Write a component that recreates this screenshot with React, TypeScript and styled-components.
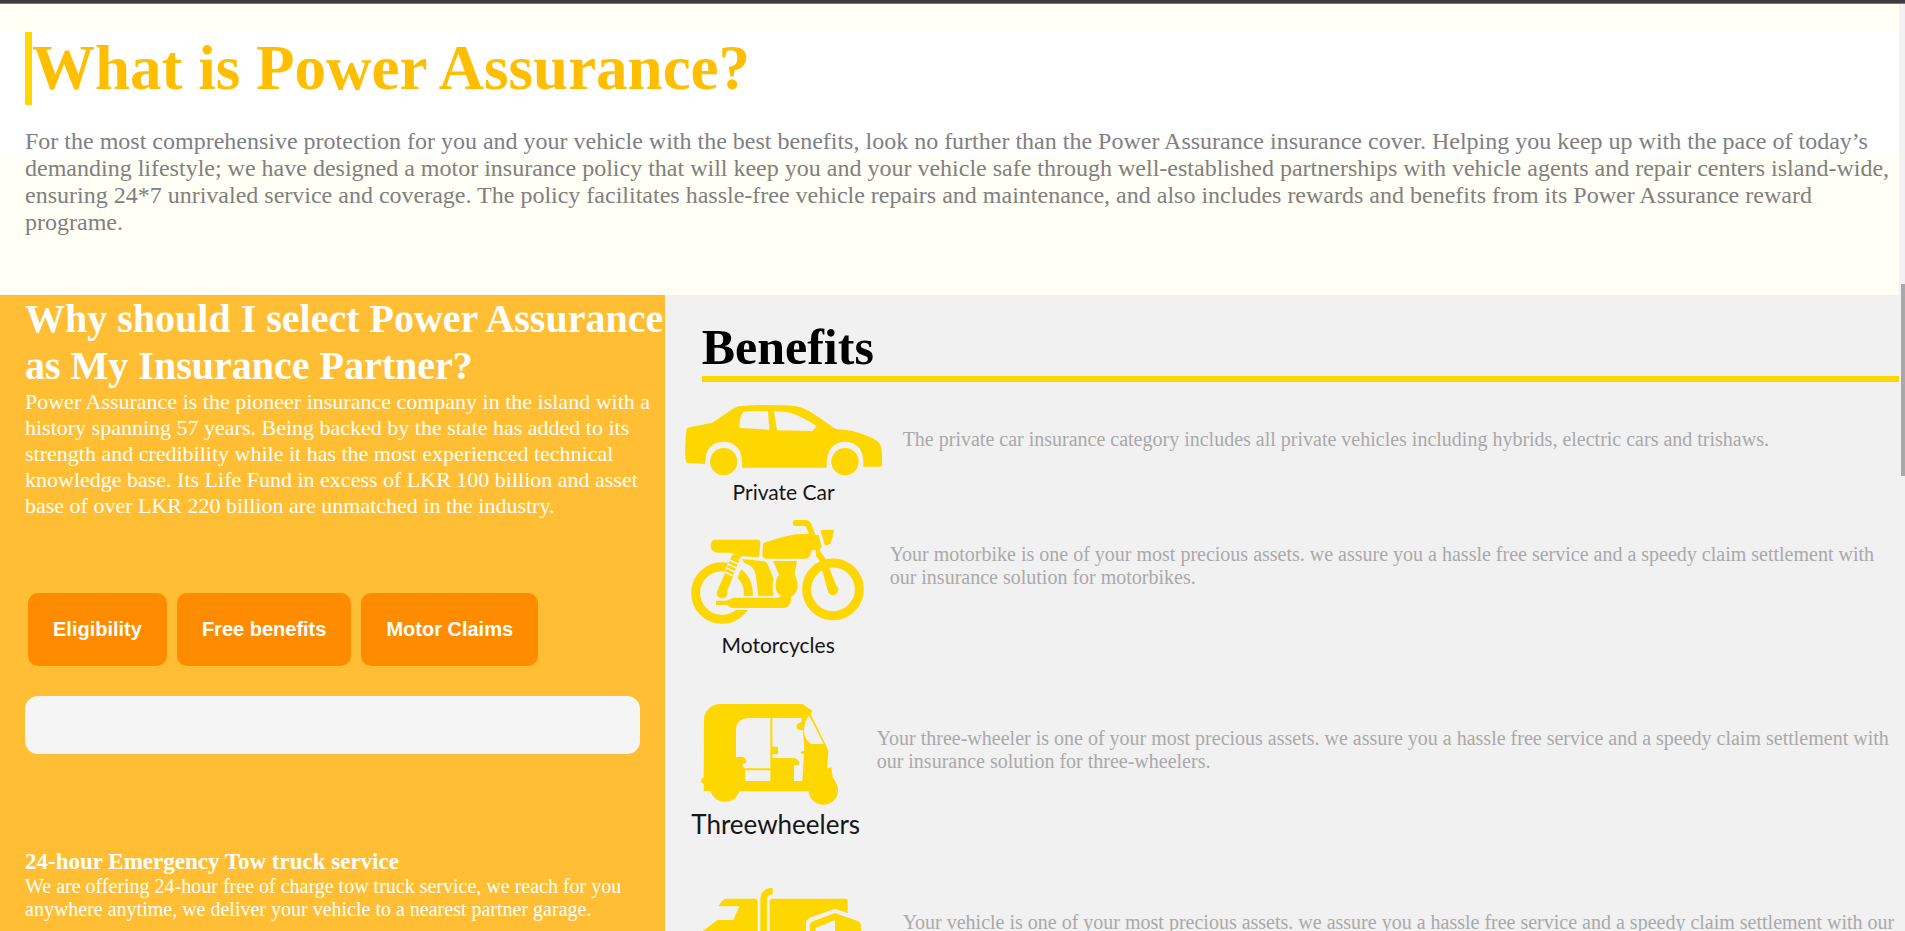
import React from "react";
import styled, { createGlobalStyle } from "styled-components";

const GlobalStyle = createGlobalStyle`
  *, *::before, *::after { box-sizing: border-box; }
  body { margin: 0; overflow: hidden; }
  h1, h2, h3, p, figure { margin: 0; }
`;

const Page = styled.div`
  display: flex;
  flex-direction: column;
  height: 100vh;
  overflow: hidden;
  font-family: "Liberation Serif", "Times New Roman", serif;
`;

const TopStrip = styled.div`
  flex: none;
  height: 4px;
  background: #3c3c3c;
  border-bottom: 1px solid #777777;
`;

const Viewport = styled.div`
  flex: 1;
  min-height: 0;
  display: flex;
`;

const Content = styled.main`
  flex: 1;
  min-width: 0;
  display: flex;
  flex-direction: column;
  overflow: hidden;
`;

const ScrollTrack = styled.div`
  flex: none;
  width: 6px;
  padding: 280px 0 0 2px;
  background: #f1f1f1;
`;

const ScrollThumb = styled.div`
  height: 192px;
  background: #a8a8a8;
`;

const Intro = styled.section`
  flex: none;
  padding: 28px 0 59px;
  background: linear-gradient(#fffff5 28px, #ffffff 28px, #ffffff 153px, #fffff5 153px);
`;

const IntroTitle = styled.h1`
  margin: 0 0 23px 25px;
  border-left: 7px solid #ffd700;
  font-size: 63px;
  line-height: 73px;
  color: #ffbf00;
`;

const IntroText = styled.p`
  padding: 0 8px 0 25px;
  font-size: 24px;
  line-height: 27px;
  color: #808080;
`;

const Columns = styled.div`
  flex: 1;
  min-height: 0;
  display: flex;
`;

const Why = styled.section`
  flex: none;
  width: 35%;
  padding-left: 25px;
  background: #ffbe33;
  color: #ffffff;
`;

const WhyTitle = styled.h2`
  font-size: 40px;
  line-height: 47px;
`;

const WhyText = styled.p`
  font-size: 22px;
  line-height: 26px;
`;

const Tabs = styled.div`
  display: flex;
  gap: 10px;
  margin: 74px 0 30px 3px;
`;

const Tab = styled.button`
  height: 73px;
  padding: 0 25px;
  border: 0;
  border-radius: 10px;
  background: #ff8c00;
  color: #ffffff;
  font: bold 20px "Liberation Sans", Arial, sans-serif;
  white-space: nowrap;
`;

const Panel = styled.div`
  height: 58px;
  margin: 0 25px 94px 0;
  border-radius: 13px;
  background: #f5f5f5;
`;

const ServiceTitle = styled.h3`
  font-size: 23px;
  line-height: 27px;
`;

const ServiceText = styled.p`
  font-size: 20px;
  line-height: 23px;
`;

const Benefits = styled.section`
  flex: 1;
  min-width: 0;
  overflow: hidden;
  background: #f1f1f1;
`;

const BenefitsTitle = styled.h2`
  margin: 24px 0 23px 37px;
  border-bottom: 6px solid #ffd700;
  font-size: 50px;
  line-height: 57px;
  color: #000000;
`;

const BenefitRow = styled.article<{ $height: number }>`
  display: flex;
  gap: 20px;
  min-height: ${(p) => p.$height}px;
  padding-left: 20px;
`;

const Figure = styled.figure<{ $width: number; $inset?: number }>`
  flex: none;
  width: ${(p) => p.$width}px;
  padding-left: ${(p) => p.$inset ?? 0}px;
  display: flex;
  flex-direction: column;
  align-items: center;

  svg {
    display: block;
    flex: none;
  }
`;

const Caption = styled.figcaption<{ $size: number }>`
  font-family: Lato, "Open Sans", sans-serif;
  font-size: ${(p) => p.$size}px;
  line-height: 24px;
  color: #161616;
  white-space: nowrap;
`;

const BenefitText = styled.p`
  flex: 1;
  min-width: 0;
  padding: 23px 4px 0 0;
  font-size: 20px;
  line-height: 23px;
  color: #a9a9a9;
`;

const YELLOW = "#ffd700";
const PAPER = "#f1f1f1";

const CarIcon = () => (
  <svg width="198" height="75" viewBox="45 45 594 225" fill={YELLOW} aria-hidden="true">
    <path d="M50 116 Q52 113 62 111 L126 98 C155 82 175 62 200 51 Q212 46 270 45 L340 46 Q385 47 405 57 C440 75 470 100 498 117 C545 119 590 133 622 153 Q636 164 636 195 L636 226 Q636 230 631 230 L580 230 Q584 157 525 155 Q467 157 470 233 L216 233 Q221 157 161 155 Q104 157 106 222 L52 219 Q48 219 47 210 Q43 160 50 116Z" />
    <path fill={PAPER} d="M220 67 Q228 64 250 63 L294 64 L298 119 L208 114 Q209 76 220 67Z" />
    <path fill={PAPER} d="M312 64 Q350 65 370 71 Q405 84 440 109 L427 123 L321 121Z" />
    <circle cx="161" cy="215" r="41" />
    <circle cx="525" cy="215" r="41" />
  </svg>
);

const MotorcycleIcon = () => (
  <svg width="174" height="113" viewBox="64 45 522 339" fill={YELLOW} aria-hidden="true">
    <circle cx="157" cy="264" r="79" fill="none" stroke={YELLOW} strokeWidth="27" />
    <path fill={PAPER} d="M139 273 H252 V315 H200 L139 308Z" />
    <circle cx="490" cy="253" r="79" fill="none" stroke={YELLOW} strokeWidth="27" />
    <path fill={PAPER} d="M186 145 L226 166 L182 268 L139 268Z" />
    <path d="M134 104 H266 Q273 104 272 115 L269 150 Q268 158 258 157 L205 152 Q195 144 180 143 H144 Q123 142 123 124 Q124 104 134 104Z" />
    <path d="M190 147 L216 154 L206 166 L184 158Z" />
    <path d="M183 160 L207 170 M178 172 L202 182 M173 184 L197 194 M168 196 L192 206" stroke={YELLOW} strokeWidth="8" fill="none" />
    <path d="M166 205 L190 215 L172 258 A16 16 0 1 1 144 255Z" />
    <path d="M217 162 L278 168 Q290 169 294 178 L312 222 Q305 240 312 272 L266 274 Q263 245 258 210 Q254 186 234 178 Q220 174 217 162Z" />
    <path d="M310 168 H382 L375 208 Q384 225 384 244 Q384 263 364 276 V286 Q361 309 340 309 H186 L172 300 H139 V287 H170 L192 278 H325 Q333 277 332 271 Q318 263 318 244 Q317 224 328 209Z" />
    <path d="M280 119 Q281 113 290 111 Q350 92 380 88 L418 86 L408 63 H378 Q369 63 369 54 Q369 45 377 45 H407 Q420 45 425 57 L437 90 L447 90 L456 125 L449 135 L468 162 L500 242 A16 16 0 1 1 474 256 L449 166 L439 154 L438 136 L428 134 L422 151 Q418 160 407 161 L289 161 Q279 160 278 151Z" />
    <path d="M453 78 Q454 74 463 74 H487 Q494 74 493 80 L483 115 Q481 120 470 121 Q466 121 464 116Z" />
  </svg>
);

const ThreeWheelerIcon = () => (
  <svg width="152" height="108" viewBox="93 42 456 324" fill={YELLOW} aria-hidden="true">
    <path
      fillRule="evenodd"
      d="M105 82 Q112 48 148 42 H400 L430 62 L425 73 L468 160 L478 183 L474 236 L487 231 L491 262 L496 269 Q507 285 507 300 A44 42 0 0 1 419 304 H211 A44 40 0 0 1 125 304 H104 V281 A11 10 0 0 1 104 262Z
      M201 114 Q205 86 240 84 H304 V235 H225 Q222 230 220 222 Q233 222 232 211 Q229 201 217 200 L201 202Z
      M310 84 H398 V96 Q382 99 382 110 Q383 121 402 121 L406 182 L395 185 V189 L405 193 L400 273 H375 V226 H385 Q393 226 390 216 Q386 205 372 204 H310 V193 H327 V170 H310Z
      M405 121 Q407 87 421 77 L464 162 H428 Q407 155 405 121Z
      M228 241 H304 V273 H228Z"
    />
  </svg>
);

const LorryIcon = () => (
  <svg width="162" height="120" viewBox="100 54 486 360" fill={YELLOW} aria-hidden="true">
    <path d="M146 109 L158 92 Q163 86 172 86 H256 Q264 86 264 94 V330 H100 V182 L144 150 H191 L209 109Z" />
    <path d="M272 330 V86 Q274 54 309 54 V73 Q293 74 292 88 V330Z" />
    <path d="M300 94 Q300 86 308 86 H526 Q534 86 534 94 V129 L496 116 L420 143 Q409 149 409 162 V330 H300Z" />
    <path fillRule="evenodd" d="M420 166 Q421 158 430 154 L496 129 L566 154 Q574 158 574 166 V330 H420Z M438 173 L496 151 V210 H438Z" />
  </svg>
);

interface Benefit {
  height: number;
  width: number;
  inset?: number;
  icon: React.ReactNode;
  label?: string;
  labelSize?: number;
  text: string;
}

const benefits: Benefit[] = [
  {
    height: 115,
    width: 198,
    icon: <CarIcon />,
    label: "Private Car",
    text: "The private car insurance category includes all private vehicles including hybrids, electric cars and trishaws.",
  },
  {
    height: 184,
    width: 185,
    inset: 2,
    icon: <MotorcycleIcon />,
    label: "Motorcycles",
    text: "Your motorbike is one of your most precious assets. we assure you a hassle free service and a speedy claim settlement with our insurance solution for motorbikes.",
  },
  {
    height: 184,
    width: 172,
    inset: 10,
    icon: <ThreeWheelerIcon />,
    label: "Threewheelers",
    labelSize: 26,
    text: "Your three-wheeler is one of your most precious assets. we assure you a hassle free service and a speedy claim settlement with our insurance solution for three-wheelers.",
  },
  {
    height: 184,
    width: 198,
    icon: <LorryIcon />,
    text: "Your vehicle is one of your most precious assets. we assure you a hassle free service and a speedy claim settlement with our",
  },
];

export default function App() {
  return (
    <>
      <GlobalStyle />
      <Page>
        <TopStrip />
        <Viewport>
          <Content>
            <Intro>
              <IntroTitle>What is Power Assurance?</IntroTitle>
              <IntroText>
                For the most comprehensive protection for you and your vehicle with the best benefits, look no
                further than the Power Assurance insurance cover. Helping you keep up with the pace of today’s
                demanding lifestyle; we have designed a motor insurance policy that will keep you and your vehicle
                safe through well-established partnerships with vehicle agents and repair centers island-wide,
                ensuring 24*7 unrivaled service and coverage. The policy facilitates hassle-free vehicle repairs and
                maintenance, and also includes rewards and benefits from its Power Assurance reward programe.
              </IntroText>
            </Intro>
            <Columns>
              <Why>
                <WhyTitle>Why should I select Power Assurance as My Insurance Partner?</WhyTitle>
                <WhyText>
                  Power Assurance is the pioneer insurance company in the island with a history spanning 57 years.
                  Being backed by the state has added to its strength and credibility while it has the most
                  experienced technical knowledge base. Its Life Fund in excess of LKR 100 billion and asset base of
                  over LKR 220 billion are unmatched in the industry.
                </WhyText>
                <Tabs>
                  <Tab type="button">Eligibility</Tab>
                  <Tab type="button">Free benefits</Tab>
                  <Tab type="button">Motor Claims</Tab>
                </Tabs>
                <Panel />
                <ServiceTitle>24-hour Emergency Tow truck service</ServiceTitle>
                <ServiceText>
                  We are offering 24-hour free of charge tow truck service, we reach for you anywhere anytime, we
                  deliver your vehicle to a nearest partner garage.
                </ServiceText>
              </Why>
              <Benefits>
                <BenefitsTitle>Benefits</BenefitsTitle>
                {benefits.map((b) => (
                  <BenefitRow key={b.text} $height={b.height}>
                    <Figure $width={b.width} $inset={b.inset}>
                      {b.icon}
                      {b.label && <Caption $size={b.labelSize ?? 21}>{b.label}</Caption>}
                    </Figure>
                    <BenefitText>{b.text}</BenefitText>
                  </BenefitRow>
                ))}
              </Benefits>
            </Columns>
          </Content>
          <ScrollTrack>
            <ScrollThumb />
          </ScrollTrack>
        </Viewport>
      </Page>
    </>
  );
}
